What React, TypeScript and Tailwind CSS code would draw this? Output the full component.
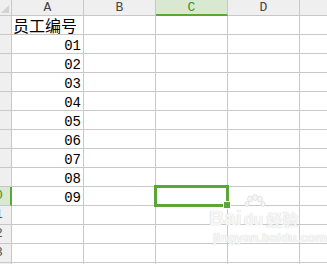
import React from "react";

const cols = ["A", "B", "C", "D", "E"];
const data: Record<number, string> = {
  1: "员工编号",
  2: "01",
  3: "02",
  4: "03",
  5: "04",
  6: "05",
  7: "06",
  8: "07",
  9: "08",
  10: "09",
};

function HeaderRow() {
  return (
    <div className="flex h-[16px]">
      <div className="relative w-[12px] shrink-0 border-r border-b border-[#c8c8c8] bg-[#efefef]">
        <div
          className="absolute left-[1px] top-[5px] h-0 w-0"
          style={{
            borderLeft: "8px solid transparent",
            borderBottom: "8px solid #d2d2d2",
          }}
        />
      </div>
      {cols.map((c) => {
        const sel = c === "C";
        return (
          <div
            key={c}
            className={
              sel
                ? "flex h-[16px] w-[72px] shrink-0 items-start justify-center border-r border-[#c8c8c8] border-b-2 border-b-[#5aa637] bg-[#d9e8d0] text-[#3d8f1d]"
                : "flex h-[16px] w-[72px] shrink-0 items-start justify-center border-r border-b border-[#c8c8c8] bg-[#efefef] text-[#444]"
            }
          >
            <span className="font-['Liberation_Mono',monospace] text-[13px] leading-[15px]">
              {c}
            </span>
          </div>
        );
      })}
    </div>
  );
}

function Row({ n }: { n: number }) {
  const selRow = n === 10;
  const val = data[n];
  return (
    <div className="flex h-[19px]">
      <div
        className={
          selRow
            ? "relative w-[12px] shrink-0 overflow-hidden border-b border-[#c8c8c8] border-r-2 border-r-[#5aa637] bg-[#d9e8d0]"
            : "relative w-[12px] shrink-0 overflow-hidden border-r border-b border-[#c8c8c8] bg-[#efefef]"
        }
      >
        <div
          className={
            "ml-[-20px] w-[30px] text-center font-['Liberation_Mono',monospace] text-[13px] leading-[18px] " +
            (selRow ? "text-[#3d8f1d]" : "text-[#555]")
          }
        >
          {n}
        </div>
      </div>
      {cols.map((c) => {
        const isA = c === "A";
        const isSel = c === "C" && selRow;
        return (
          <div
            key={c}
            className="relative w-[72px] shrink-0 border-r border-b border-[#c8c8c8] bg-white"
          >
            {isA && val && n === 1 && (
              <div className="pl-[1px] font-['Noto_Sans_CJK_SC',sans-serif] text-[16px] leading-[18px] text-black">
                {val}
              </div>
            )}
            {isA && val && n !== 1 && (
              <div className="pr-[2px] pt-[2px] text-right font-['Liberation_Mono',monospace] text-[14px] leading-[18px] text-black">
                {val}
              </div>
            )}
            {isSel && (
              <>
                <div className="absolute left-[-2px] top-[-2px] z-10 h-[22px] w-[75px] border-[3px] border-[#5aa637]" />
                <div className="absolute left-[67px] top-[14px] z-20 h-[8px] w-[8px] border border-white bg-[#5aa637]" />
              </>
            )}
          </div>
        );
      })}
    </div>
  );
}

export default function App() {
  const rows = Array.from({ length: 14 }, (_, i) => i + 1);
  return (
    <div className="relative h-[264px] w-[327px] overflow-hidden bg-white">
      <HeaderRow />
      {rows.map((n) => (
        <Row key={n} n={n} />
      ))}
      <div className="pointer-events-none absolute left-[209px] top-[206px] z-30 select-none text-[#f6f6f6] [text-shadow:0_0_1px_#dcdcdc,0_0_1px_#dcdcdc]">
        <div className="flex items-end">
          <span className="font-['Liberation_Sans',sans-serif] text-[21px] font-bold leading-[24px]">
            Bai
          </span>
          <span className="relative ml-[2px] font-['Liberation_Sans',sans-serif] text-[16px] font-bold leading-[20px]">
            du
            <svg
              className="absolute left-[0px] top-[-16px]"
              width="22"
              height="16"
              viewBox="0 0 22 16"
            >
              <g fill="#f6f6f6" stroke="#dcdcdc" strokeWidth="0.8">
                <ellipse cx="6" cy="5" rx="2.4" ry="3" />
                <ellipse cx="11" cy="3.5" rx="2.4" ry="3" />
                <ellipse cx="16" cy="5" rx="2.4" ry="3" />
                <ellipse cx="3" cy="10" rx="2" ry="2.4" />
                <ellipse cx="19" cy="10" rx="2" ry="2.4" />
              </g>
            </svg>
          </span>
          <span className="ml-[3px] font-['Noto_Sans_CJK_SC',sans-serif] text-[16px] font-bold leading-[22px]">
            经验
          </span>
        </div>
        <div className="mt-[1px] pl-[4px] font-['Liberation_Sans',sans-serif] text-[13px] font-bold leading-[14px]">
          jingyan.baidu.com
        </div>
      </div>
    </div>
  );
}
